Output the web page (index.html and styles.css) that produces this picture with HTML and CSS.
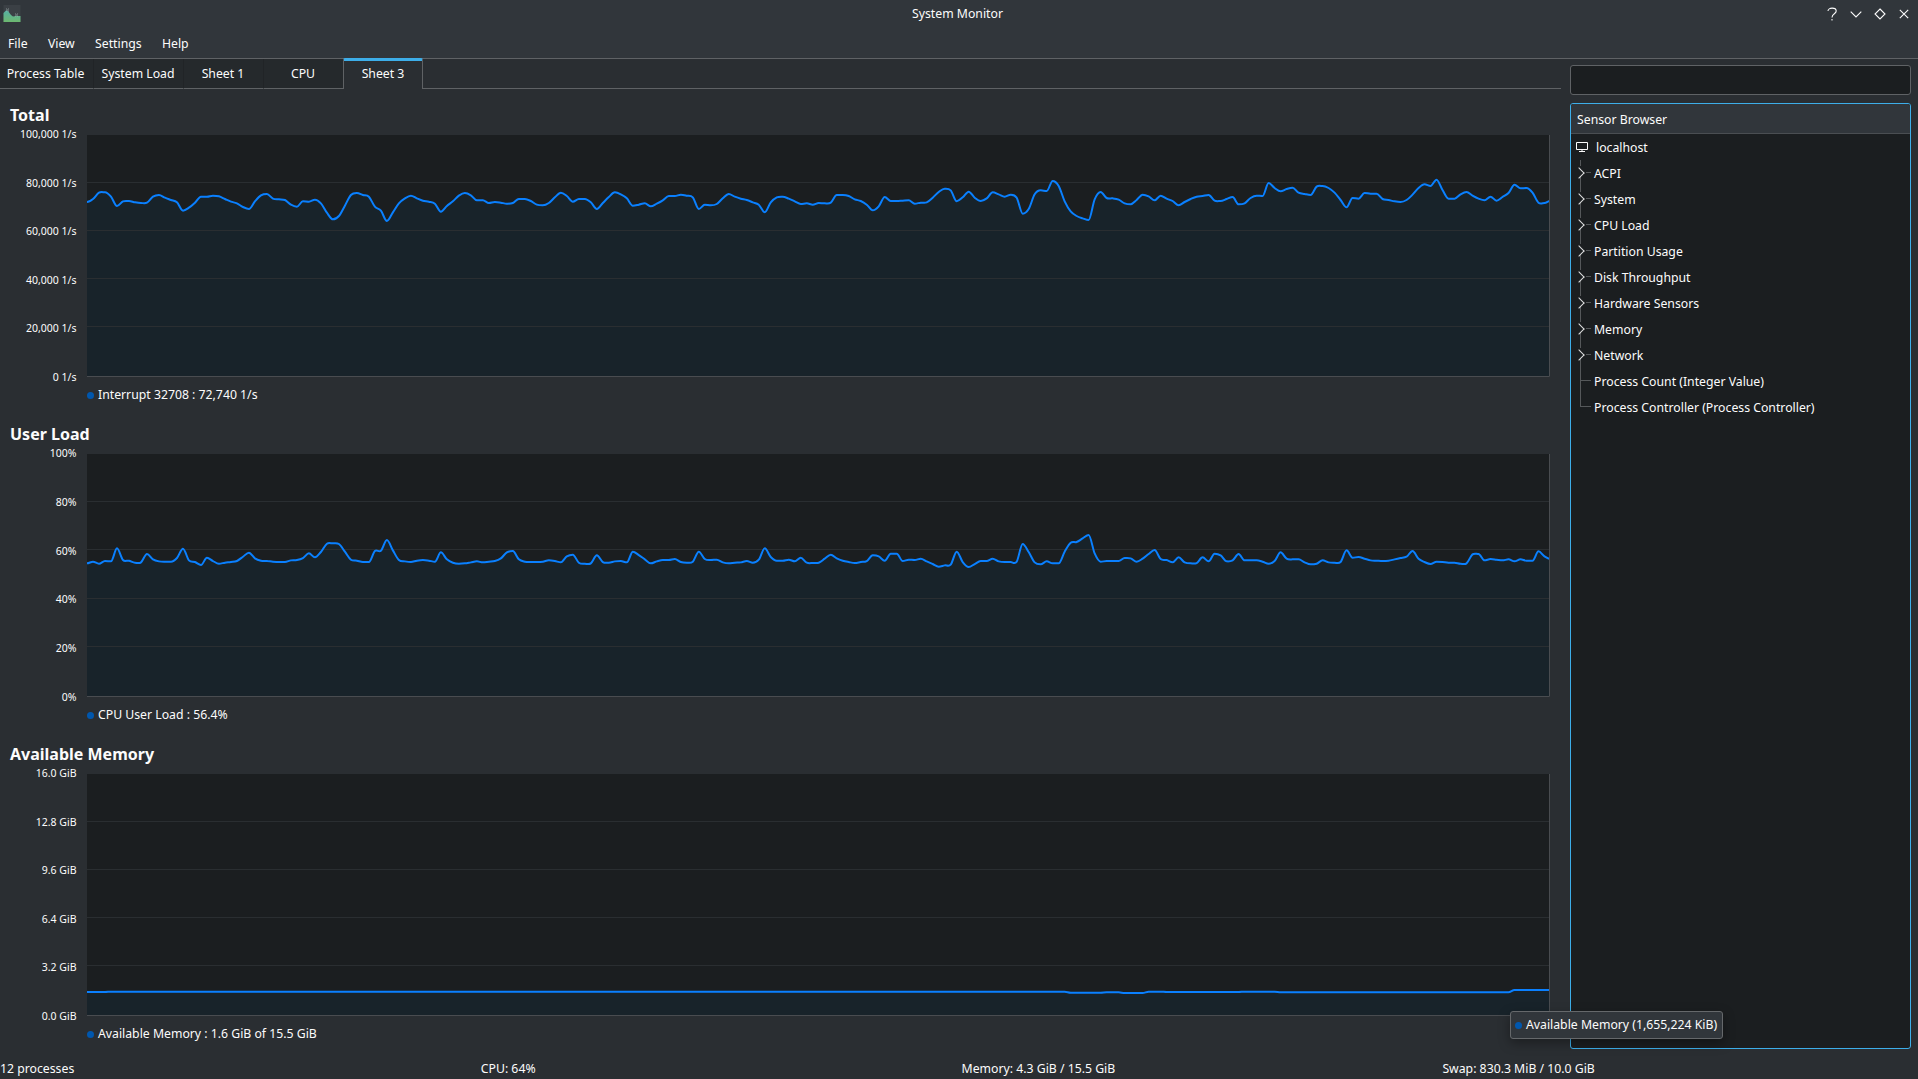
FILE: index.html
```html
<!DOCTYPE html>
<html lang="en">
  <head>
    <meta charset="UTF-8" />
    <meta name="viewport" content="width=device-width, initial-scale=1.0" />
    <title>System Monitor</title>
    <link rel="stylesheet" href="styles.css">
  </head>
  <body>
    <header class="window-header">
      <div class="title-bar">
        <svg class="app-icon" width="18" height="18" viewBox="0 0 18 18">
          <defs>
            <linearGradient id="hill" x1="0" y1="0" x2="0" y2="1">
              <stop offset="0" stop-color="#55b0a4" />
              <stop offset="1" stop-color="#6db870" />
            </linearGradient>
          </defs>
          <rect x="0.5" width="17" height="17" fill="#3b4045" />
          <path d="M0.5 17V8L3 5.5L5 6L8 10L10 11.5L13 11L17.5 11V17Z" fill="url(#hill)" />
          <path d="M3 4h1M5 4h1M4 5h1M3 6h1M5 6h1M12 9h1M14 9h1M13 10h1M12 11h1M14 11h1" stroke="#a5b5b5" opacity="0.7" />
        </svg>
        <div class="window-title">System Monitor</div>
        <div class="window-buttons">
          <svg width="16" height="16" viewBox="0 0 16 16"><path d="M4 5C4 1.2 12.2 1.2 12.2 5C12.2 8 8 7.5 8 11.5" /><path d="M8 13v1.6" /></svg>
          <svg width="16" height="16" viewBox="0 0 16 16"><path d="M2.7 5.7L8 11L13.3 5.7" /></svg>
          <svg width="16" height="16" viewBox="0 0 16 16"><path d="M8 3L13 8L8 13L3 8Z" /></svg>
          <svg width="16" height="16" viewBox="0 0 16 16"><path d="M3.8 3.8L12.2 12.2M12.2 3.8L3.8 12.2" /></svg>
        </div>
      </div>
      <nav class="menu-bar">
        <span>File</span>
        <span>View</span>
        <span>Settings</span>
        <span>Help</span>
      </nav>
    </header>

    <main class="content">
      <div class="sheet">
        <div class="tabs">
          <div class="tab tab-table">Process Table</div>
          <div class="tab tab-load">System Load</div>
          <div class="tab">Sheet 1</div>
          <div class="tab">CPU</div>
          <div class="tab active">Sheet 3</div>
          <div class="tabs-rest"></div>
        </div>

        <section class="monitor">
          <h2>Total</h2>
          <div class="chart">
            <div class="axis">
              <span>100,000 1/s</span>
              <span>80,000 1/s</span>
              <span>60,000 1/s</span>
              <span>40,000 1/s</span>
              <span>20,000 1/s</span>
              <span>0 1/s</span>
            </div>
            <svg class="plot" id="interrupts"></svg>
          </div>
          <div class="legend"><i class="dot"></i>Interrupt 32708 : 72,740 1/s</div>
        </section>

        <section class="monitor tall">
          <h2>User Load</h2>
          <div class="chart">
            <div class="axis">
              <span>100%</span>
              <span>80%</span>
              <span>60%</span>
              <span>40%</span>
              <span>20%</span>
              <span>0%</span>
            </div>
            <svg class="plot" id="userLoad"></svg>
          </div>
          <div class="legend"><i class="dot"></i>CPU User Load : 56.4%</div>
        </section>

        <section class="monitor">
          <h2>Available Memory</h2>
          <div class="chart">
            <div class="axis">
              <span>16.0 GiB</span>
              <span>12.8 GiB</span>
              <span>9.6 GiB</span>
              <span>6.4 GiB</span>
              <span>3.2 GiB</span>
              <span>0.0 GiB</span>
            </div>
            <svg class="plot" id="memory"></svg>
          </div>
          <div class="legend"><i class="dot"></i>Available Memory : 1.6 GiB of 15.5 GiB</div>
        </section>
      </div>

      <aside class="dock">
        <input class="search" type="text" aria-label="Search" />
        <div class="browser">
          <div class="browser-header">Sensor Browser</div>
          <div class="host">
            <svg width="14" height="12" viewBox="0 0 14 12"><path d="M1.5 1.5h11v7h-11zM7 9v2M4 10.5h6" /></svg>
            <span>localhost</span>
          </div>
          <ul class="tree">
            <li class="branch">ACPI</li>
            <li class="branch">System</li>
            <li class="branch">CPU Load</li>
            <li class="branch">Partition Usage</li>
            <li class="branch">Disk Throughput</li>
            <li class="branch">Hardware Sensors</li>
            <li class="branch">Memory</li>
            <li class="branch">Network</li>
            <li class="leaf">Process Count (Integer Value)</li>
            <li class="leaf last">Process Controller (Process Controller)</li>
          </ul>
        </div>
      </aside>
    </main>

    <footer class="status-bar">
      <span>12 processes</span>
      <span>CPU: 64%</span>
      <span>Memory: 4.3 GiB / 15.5 GiB</span>
      <span>Swap: 830.3 MiB / 10.0 GiB</span>
    </footer>

    <div class="tooltip"><i class="dot"></i>Available Memory (1,655,224 KiB)</div>

    <script src="charts.js"></script>
  </body>
</html>
```

FILE: styles.css
```css
* {
  box-sizing: border-box;
}

body {
  margin: 0;
  height: 1079px;
  display: flex;
  flex-direction: column;
  overflow: hidden;
  font-family: "Noto Sans", sans-serif;
  font-size: 12.25px;
  line-height: 18px;
  color: #fcfcfc;
  background: #2a2e32;
}

.window-header {
  height: 59px;
  background: #31363b;
  border-bottom: 1px solid #5f6265;
}

.title-bar {
  height: 28px;
  padding: 0 6px 0 3px;
  display: grid;
  grid-template-columns: 1fr auto 1fr;
  align-items: center;
}

.app-icon {
  margin-top: -1px;
}

.window-buttons {
  display: flex;
  justify-content: flex-end;
  gap: 8px;
}

.window-buttons svg {
  fill: none;
  stroke: #fcfcfc;
  stroke-width: 1.1;
  margin-top: -1px;
}

.menu-bar {
  display: flex;
  gap: 20.3px;
  padding: 7px 8px 0;
}

.content {
  flex: 1;
  display: flex;
  min-height: 0;
}

.sheet {
  width: 1561px;
}

.tabs {
  display: flex;
  height: 30px;
  margin-bottom: 15px;
}

.tab {
  width: 80px;
  text-align: center;
  padding: 6px 1px 0 0;
  background: #25292c;
  border-right: 1px solid #212427;
  border-bottom: 1px solid #5f6265;
}

.tab-table {
  width: 94px;
  padding-right: 2px;
}

.tab-load {
  width: 90px;
}

.tab.active {
  margin-top: -1px;
  margin-left: -1px;
  padding: 4px 0 0;
  background: #2a2e32;
  border: 1px solid #5f6265;
  border-top: 3px solid #3daee9;
  border-radius: 2px 2px 0 0;
  border-bottom: none;
}

.tabs-rest {
  flex: 1;
  border-bottom: 1px solid #5f6265;
}

.monitor {
  height: 319px;
}

.monitor h2 {
  margin: 0;
  padding-left: 10px;
  height: 22px;
  font-size: 16px;
  line-height: 22px;
  font-weight: 700;
}

.chart {
  display: flex;
  height: 259px;
}

.axis {
  width: 87px;
  padding-right: 10.5px;
  display: flex;
  flex-direction: column;
  justify-content: space-between;
  text-align: right;
  font-size: 10.5px;
  line-height: 16px;
}

.plot {
  width: 1463px;
  height: 242px;
  margin-top: 9px;
  background: #1b1e20;
}

.monitor.tall {
  height: 320px;
}

.tall .chart {
  height: 260px;
}

.tall .plot {
  height: 243px;
}

.plot .grid {
  stroke: #2a2e31;
}

.plot .frame {
  fill: none;
  stroke: #494c50;
}

.plot .area {
  fill: rgba(0, 105, 170, 0.075);
}

.plot .line {
  fill: none;
  stroke: #0a80ff;
  stroke-width: 2;
  stroke-linejoin: round;
}

.legend {
  display: flex;
  align-items: center;
  gap: 4px;
  padding-left: 87px;
  height: 19px;
}

.dot {
  flex: none;
  width: 7px;
  height: 7px;
  margin-top: 2px;
  border-radius: 50%;
  background: #0057ae;
}

.dock {
  width: 341px;
  margin-left: 9px;
  padding-top: 6px;
  display: flex;
  flex-direction: column;
  gap: 8px;
}

.search {
  width: 100%;
  height: 30px;
  border: 1px solid #5f6265;
  border-radius: 3px;
  background: #1b1e20;
}

.browser {
  height: 946px;
  border: 1px solid #3daee9;
  border-radius: 3px;
  background: #1b1e20;
  overflow: hidden;
}

.browser-header {
  height: 30px;
  padding: 7px 6px 0;
  background: #31363b;
  border-bottom: 1px solid #4a4e52;
}

.host {
  display: flex;
  align-items: center;
  gap: 7px;
  height: 26px;
  padding-left: 4px;
}

.host span {
  padding-top: 2px;
}

.host svg {
  fill: none;
  stroke: #fcfcfc;
}

.tree {
  margin: 0;
  padding: 0;
  list-style: none;
}

.tree li {
  position: relative;
  height: 26px;
  line-height: 28px;
  padding-left: 23px;
}

/* connector lines of the tree */
.tree li::before {
  content: "";
  position: absolute;
  left: 9px;
  top: 0;
  width: 11px;
  height: 26px;
  background:
    linear-gradient(#55585a, #55585a) 0 0 / 1px 100% no-repeat,
    linear-gradient(#55585a, #55585a) 0 12px / 11px 1px no-repeat;
}

.tree .branch::before {
  background:
    linear-gradient(#55585a, #55585a) 0 0 / 1px 6px no-repeat,
    linear-gradient(#55585a, #55585a) 0 17px / 1px 9px no-repeat,
    linear-gradient(#55585a, #55585a) 6px 12px / 5px 1px no-repeat;
}

.tree .last::before {
  height: 13px;
}

.tree .branch::after {
  content: "";
  position: absolute;
  left: 4px;
  top: 9px;
  width: 7px;
  height: 7px;
  border: solid #e0e1e1;
  border-width: 1px 1px 0 0;
  transform: rotate(45deg);
}

.status-bar {
  display: grid;
  grid-template-columns: repeat(4, 480.8px);
  height: 20px;
  padding-top: 1px;
}

.tooltip {
  position: absolute;
  left: 1510px;
  top: 1011px;
  width: 213px;
  height: 28px;
  padding: 0 0 1px 4px;
  display: flex;
  align-items: center;
  gap: 4px;
  white-space: nowrap;
  background: #31363b;
  border: 1px solid #65686b;
  border-radius: 3px;
  box-shadow: 0 4px 12px rgba(0, 0, 0, 0.35);
}
```

FILE: charts.js
```js
// sample heights, in thirds of a pixel below the chart's offset
const interrupts = [
  126, 117, 98, 97, 110, 138, 124, 123, 127, 129, 128, 110, 105, 113, 120, 127,
  152, 143, 128, 110, 110, 107, 109, 117, 125, 130, 141, 147, 124, 106, 102, 116,
  118, 120, 134, 140, 124, 125, 119, 130, 158, 178, 168, 137, 105, 99, 105, 110,
  140, 152, 183, 157, 130, 115, 107, 115, 122, 125, 131, 155, 138, 124, 107, 99,
  106, 121, 121, 129, 126, 128, 131, 129, 117, 117, 123, 134, 136, 129, 112, 98,
  108, 125, 117, 117, 127, 147, 129, 111, 97, 103, 115, 137, 134, 130, 139, 131,
  121, 108, 108, 104, 107, 112, 147, 134, 136, 132, 115, 102, 110, 116, 120, 127,
  134, 157, 127, 112, 110, 116, 124, 132, 130, 134, 129, 130, 128, 105, 105, 108,
  118, 123, 134, 151, 139, 111, 123, 123, 122, 121, 131, 128, 127, 113, 96, 86,
  91, 124, 112, 95, 113, 123, 115, 97, 103, 110, 104, 113, 161, 147, 103, 91,
  93, 63, 78, 124, 154, 168, 175, 180, 118, 96, 114, 115, 119, 130, 133, 120,
  104, 109, 121, 107, 116, 123, 136, 126, 117, 110, 108, 105, 122, 123, 117, 111,
  133, 130, 114, 107, 108, 69, 84, 94, 87, 83, 98, 102, 105, 80, 78, 84,
  98, 120, 142, 114, 116, 99, 101, 101, 117, 120, 124, 126, 120, 104, 84, 73,
  78, 59, 90, 116, 116, 103, 96, 107, 116, 121, 110, 122, 111, 99, 74, 85,
  84, 98, 128, 129, 122
];

const userLoad = [
  131, 126, 132, 124, 125, 86, 121, 123, 129, 128, 103, 119, 125, 126, 126, 115,
  87, 122, 127, 136, 114, 124, 132, 129, 127, 124, 111, 99, 116, 123, 124, 126,
  127, 127, 122, 121, 115, 101, 113, 97, 72, 71, 73, 96, 120, 123, 127, 127,
  94, 93, 61, 92, 121, 125, 127, 123, 121, 123, 126, 98, 119, 129, 132, 131,
  128, 125, 128, 126, 124, 116, 98, 94, 119, 126, 127, 127, 126, 122, 124, 128,
  110, 105, 129, 132, 131, 107, 127, 129, 125, 124, 128, 96, 106, 119, 131, 125,
  121, 121, 118, 127, 129, 126, 96, 118, 121, 120, 128, 131, 129, 128, 124, 129,
  120, 86, 112, 123, 123, 120, 125, 114, 129, 130, 129, 117, 105, 116, 123, 127,
  130, 127, 124, 107, 110, 123, 102, 102, 124, 120, 121, 117, 125, 133, 141, 137,
  135, 96, 127, 142, 133, 124, 124, 117, 125, 127, 127, 126, 73, 97, 128, 134,
  125, 131, 131, 96, 69, 67, 56, 46, 101, 126, 124, 124, 124, 115, 116, 126,
  117, 103, 91, 118, 121, 128, 113, 128, 131, 130, 113, 125, 102, 107, 125, 122,
  103, 122, 122, 122, 126, 132, 124, 98, 117, 119, 119, 128, 134, 132, 122, 128,
  129, 127, 92, 114, 112, 117, 122, 123, 124, 123, 119, 115, 111, 94, 117, 127,
  133, 126, 127, 129, 129, 132, 131, 104, 103, 122, 118, 120, 122, 119, 125, 119,
  123, 123, 95, 110, 118
];

// memory hardly moves, so it is kept as runs: [samples, height]
const memoryRuns = [
  [4, 654], [160, 653], [6, 656], [3, 655], [4, 657], [3, 653],
  [13, 654], [6, 653], [39, 655], [7, 648]
];
const memory = memoryRuns.flatMap(([count, value]) => Array(count).fill(value));

const plotWidth = 1462;

function drawChart(id, samples, offset, gridLines, bottom) {
  const step = (plotWidth + 1.5) / (samples.length - 1);
  const points = samples.map((s, i) => [i * step, offset + s / 3]);

  let line = `M${points[0][0]} ${points[0][1]}`;
  for (let i = 1; i < points.length; i++) {
    const before = points[i - 2] || points[i - 1];
    const from = points[i - 1];
    const to = points[i];
    const after = points[i + 1] || to;
    const slopeFrom = tangent(before, from, to);
    const slopeTo = tangent(from, to, after);
    line += `C${from[0] + step / 3} ${from[1] + slopeFrom / 3} ${to[0] - step / 3} ${to[1] - slopeTo / 3} ${to[0]} ${to[1]}`;
  }

  const grid = gridLines
    .map((y) => `<path class="grid" d="M0 ${y + 0.5}H${plotWidth}" />`)
    .join("");

  document.getElementById(id).innerHTML = `
    <path class="area" d="${line}V${bottom}H0Z" />
    ${grid}
    <path class="line" d="${line}" />
    <path class="frame" d="M0 ${bottom + 0.5}H${plotWidth + 0.5}V0" />`;
}

// flat at peaks and troughs so that the curve never overshoots
function tangent(a, b, c) {
  const left = b[1] - a[1];
  const right = c[1] - b[1];
  return left * right <= 0 ? 0 : (left + right) / 2;
}

drawChart("interrupts", interrupts, 25, [47, 95, 143, 191], 241);
drawChart("userLoad", userLoad, 65.7, [47, 95, 144, 192], 242);
drawChart("memory", memory, 0, [47, 95, 143, 191], 241);
```
